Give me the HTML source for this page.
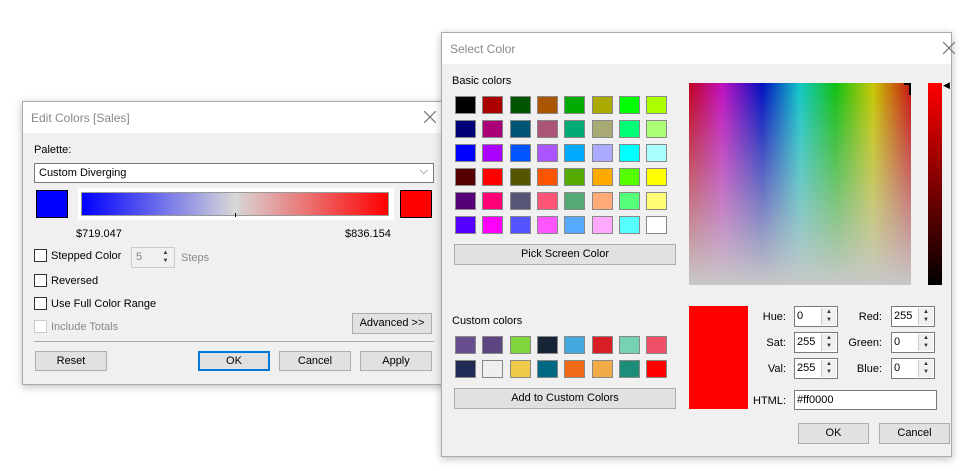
<!DOCTYPE html>
<html><head><style>
*{box-sizing:border-box;margin:0;padding:0}
body{width:976px;height:471px;background:#fff;position:relative;overflow:hidden;font-family:"Liberation Sans",sans-serif;font-size:11px;color:#000}
.a{position:absolute}
.dlg{position:absolute;background:#f0f0f0;border:1px solid #aaa;box-shadow:0 2px 8px rgba(0,0,0,.25)}
.tb{position:absolute;left:0;right:0;top:0;height:31px;background:#fff;color:#888;font-size:12px;padding:9px 0 0 8px}
.x{position:absolute;top:9px;width:12px;height:12px}
.btn{position:absolute;background:#e1e1e1;border:1px solid #adadad;text-align:center;line-height:19px}
.sw{position:absolute;width:21px;height:18px;border:1px solid #888}
.cb{position:absolute;width:13px;height:13px;border:1px solid #333;background:#fff}
.in{position:absolute;background:#fff;border:1px solid #7a7a7a;height:21px;padding:3px 2px}
.sp{position:absolute;right:1px;top:1px;width:15px;bottom:1px;background:#f0f0f0;border-left:1px solid #ccc;font-size:6px;line-height:8px;text-align:center;color:#333}
.lbl{position:absolute;text-align:right;width:60px}
</style></head><body>

<div class="dlg" style="left:22px;top:101px;width:430px;height:284px">
<div class="tb">Edit Colors [Sales]</div><svg class="x" style="left:401px" viewBox="0 0 12 12"><path d="M0 0L12 12M12 0L0 12" stroke="#777" stroke-width="1.2"/></svg>
<div class="a" style="left:11px;top:42px">Palette:</div>
<div class="a" style="left:11px;top:61px;width:400px;height:20px;background:#fff;border:1px solid #7a7a7a;padding:3px 4px">Custom Diverging<span class="a" style="right:5px;top:1px;color:#444">⌵</span></div>
<div class="a" style="left:13px;top:88px;width:32px;height:28px;background:#00f;border:1px solid #000"></div>
<div class="a" style="left:55px;top:86px;width:316px;height:32px;background:#fff"></div>
<div class="a" style="left:58px;top:90px;width:308px;height:24px;border:1px solid #999;background:linear-gradient(to right,#00f,#d8d8d8 50%,#f00)"></div>
<div class="a" style="left:212px;top:111px;width:1px;height:4px;background:#000"></div>
<div class="a" style="left:377px;top:88px;width:32px;height:28px;background:#f00;border:1px solid #000"></div>
<div class="a" style="left:53px;top:126px">$719.047</div>
<div class="a" style="left:322px;top:126px">$836.154</div>
<div class="cb" style="left:11px;top:147px"></div><div class="a" style="left:28px;top:148px">Stepped Color</div>
<div class="a" style="left:108px;top:145px;width:44px;height:21px;border:1px solid #ccc;color:#888;padding:3px 4px">5<div class="sp" style="background:#f0f0f0;border:0">▲<br>▼</div></div>
<div class="a" style="left:158px;top:150px;color:#888">Steps</div>
<div class="cb" style="left:11px;top:172px"></div><div class="a" style="left:28px;top:173px">Reversed</div>
<div class="cb" style="left:11px;top:195px"></div><div class="a" style="left:28px;top:196px">Use Full Color Range</div>
<div class="cb" style="left:11px;top:218px;border-color:#ccc"></div><div class="a" style="left:28px;top:219px;color:#888">Include Totals</div>
<div class="btn" style="left:329px;top:211px;width:80px;height:21px">Advanced &gt;&gt;</div>
<div class="a" style="left:11px;top:239px;width:400px;height:1px;background:#aaa"></div>
<div class="btn" style="left:12px;top:249px;width:72px;height:20px">Reset</div>
<div class="btn" style="left:175px;top:249px;width:72px;height:20px;border:2px solid #0078d7;line-height:16px">OK</div>
<div class="btn" style="left:256px;top:249px;width:72px;height:20px">Cancel</div>
<div class="btn" style="left:337px;top:249px;width:72px;height:20px">Apply</div>
</div>

<div class="dlg" style="left:441px;top:32px;width:511px;height:425px">
<div class="tb">Select Color</div><svg class="x" style="left:501px" viewBox="0 0 12 12"><path d="M0 0L12 12M12 0L0 12" stroke="#777" stroke-width="1.2"/></svg>
<div class="a" style="left:10px;top:42px">Basic colors</div>
<div id="basic"></div>
<div class="btn" style="left:12px;top:211px;width:222px;height:21px">Pick Screen Color</div>
<div class="a" style="left:247px;top:50px;width:222px;height:202px;background:linear-gradient(to bottom,rgba(200,200,200,0),#c8c8c8),linear-gradient(to right,#c00020,#c010c0 15%,#0010c0 33%,#10c8c8 50%,#10c010 66%,#c8c800 83%,#c81010)"></div>
<div class="a" style="left:462px;top:50px;width:7px;height:12px;border-top:2px solid #000;border-right:2px solid #000"></div>
<div class="a" style="left:486px;top:50px;width:14px;height:202px;background:linear-gradient(#f00,#000)"></div>
<div class="a" style="left:501px;top:47px;font-size:9px">◀</div>
<div class="a" style="left:10px;top:282px">Custom colors</div>
<div id="cust"></div>
<div class="btn" style="left:12px;top:355px;width:222px;height:21px">Add to Custom Colors</div>
<div class="a" style="left:247px;top:273px;width:59px;height:103px;background:#f00"></div>
<div class="lbl" style="left:284px;top:278px">Hue:</div><div class="in" style="left:352px;top:273px;width:44px">0<div class="sp">▲<br>▼</div></div>
<div class="lbl" style="left:284px;top:304px">Sat:</div><div class="in" style="left:352px;top:299px;width:44px">255<div class="sp">▲<br>▼</div></div>
<div class="lbl" style="left:284px;top:330px">Val:</div><div class="in" style="left:352px;top:325px;width:44px">255<div class="sp">▲<br>▼</div></div>
<div class="lbl" style="left:380px;top:278px">Red:</div><div class="in" style="left:449px;top:273px;width:44px">255<div class="sp">▲<br>▼</div></div>
<div class="lbl" style="left:380px;top:304px">Green:</div><div class="in" style="left:449px;top:299px;width:44px">0<div class="sp">▲<br>▼</div></div>
<div class="lbl" style="left:380px;top:330px">Blue:</div><div class="in" style="left:449px;top:325px;width:44px">0<div class="sp">▲<br>▼</div></div>
<div class="lbl" style="left:284px;top:362px">HTML:</div><div class="in" style="left:352px;top:357px;width:143px;height:20px">#ff0000</div>
<div class="btn" style="left:356px;top:390px;width:71px;height:21px">OK</div>
<div class="btn" style="left:437px;top:390px;width:71px;height:21px">Cancel</div>
</div>

<script>
var b=["#000","#a00","#050","#a50","#0a0","#aa0","#0f0","#af0",
"#007","#a07","#057","#a57","#0a7","#aa7","#0f7","#af7",
"#00f","#a0f","#05f","#a5f","#0af","#aaf","#0ff","#aff",
"#500","#f00","#550","#f50","#5a0","#fa0","#5f0","#ff0",
"#507","#f07","#557","#f57","#5a7","#fa7","#5f7","#ff7",
"#50f","#f0f","#55f","#f5f","#5af","#faf","#5ff","#fff"];
var c=["#684e8f","#5c4580","#7ed63c","#162536","#42a8de","#d91f26","#78d1b4","#ef5068",
"#202c55","#efefef","#efc94a","#006882","#f26b19","#f0aa46","#1b8d78","#ff0000"];
function put(id,arr,top){var h="";arr.forEach(function(col,i){h+='<div class="sw" style="left:'+(13+(i%8)*27.3)+'px;top:'+(top+Math.floor(i/8)*24)+'px;background:'+col+'"></div>'});document.getElementById(id).innerHTML=h}
put("basic",b,63);put("cust",c,303);
</script>
</body></html>
